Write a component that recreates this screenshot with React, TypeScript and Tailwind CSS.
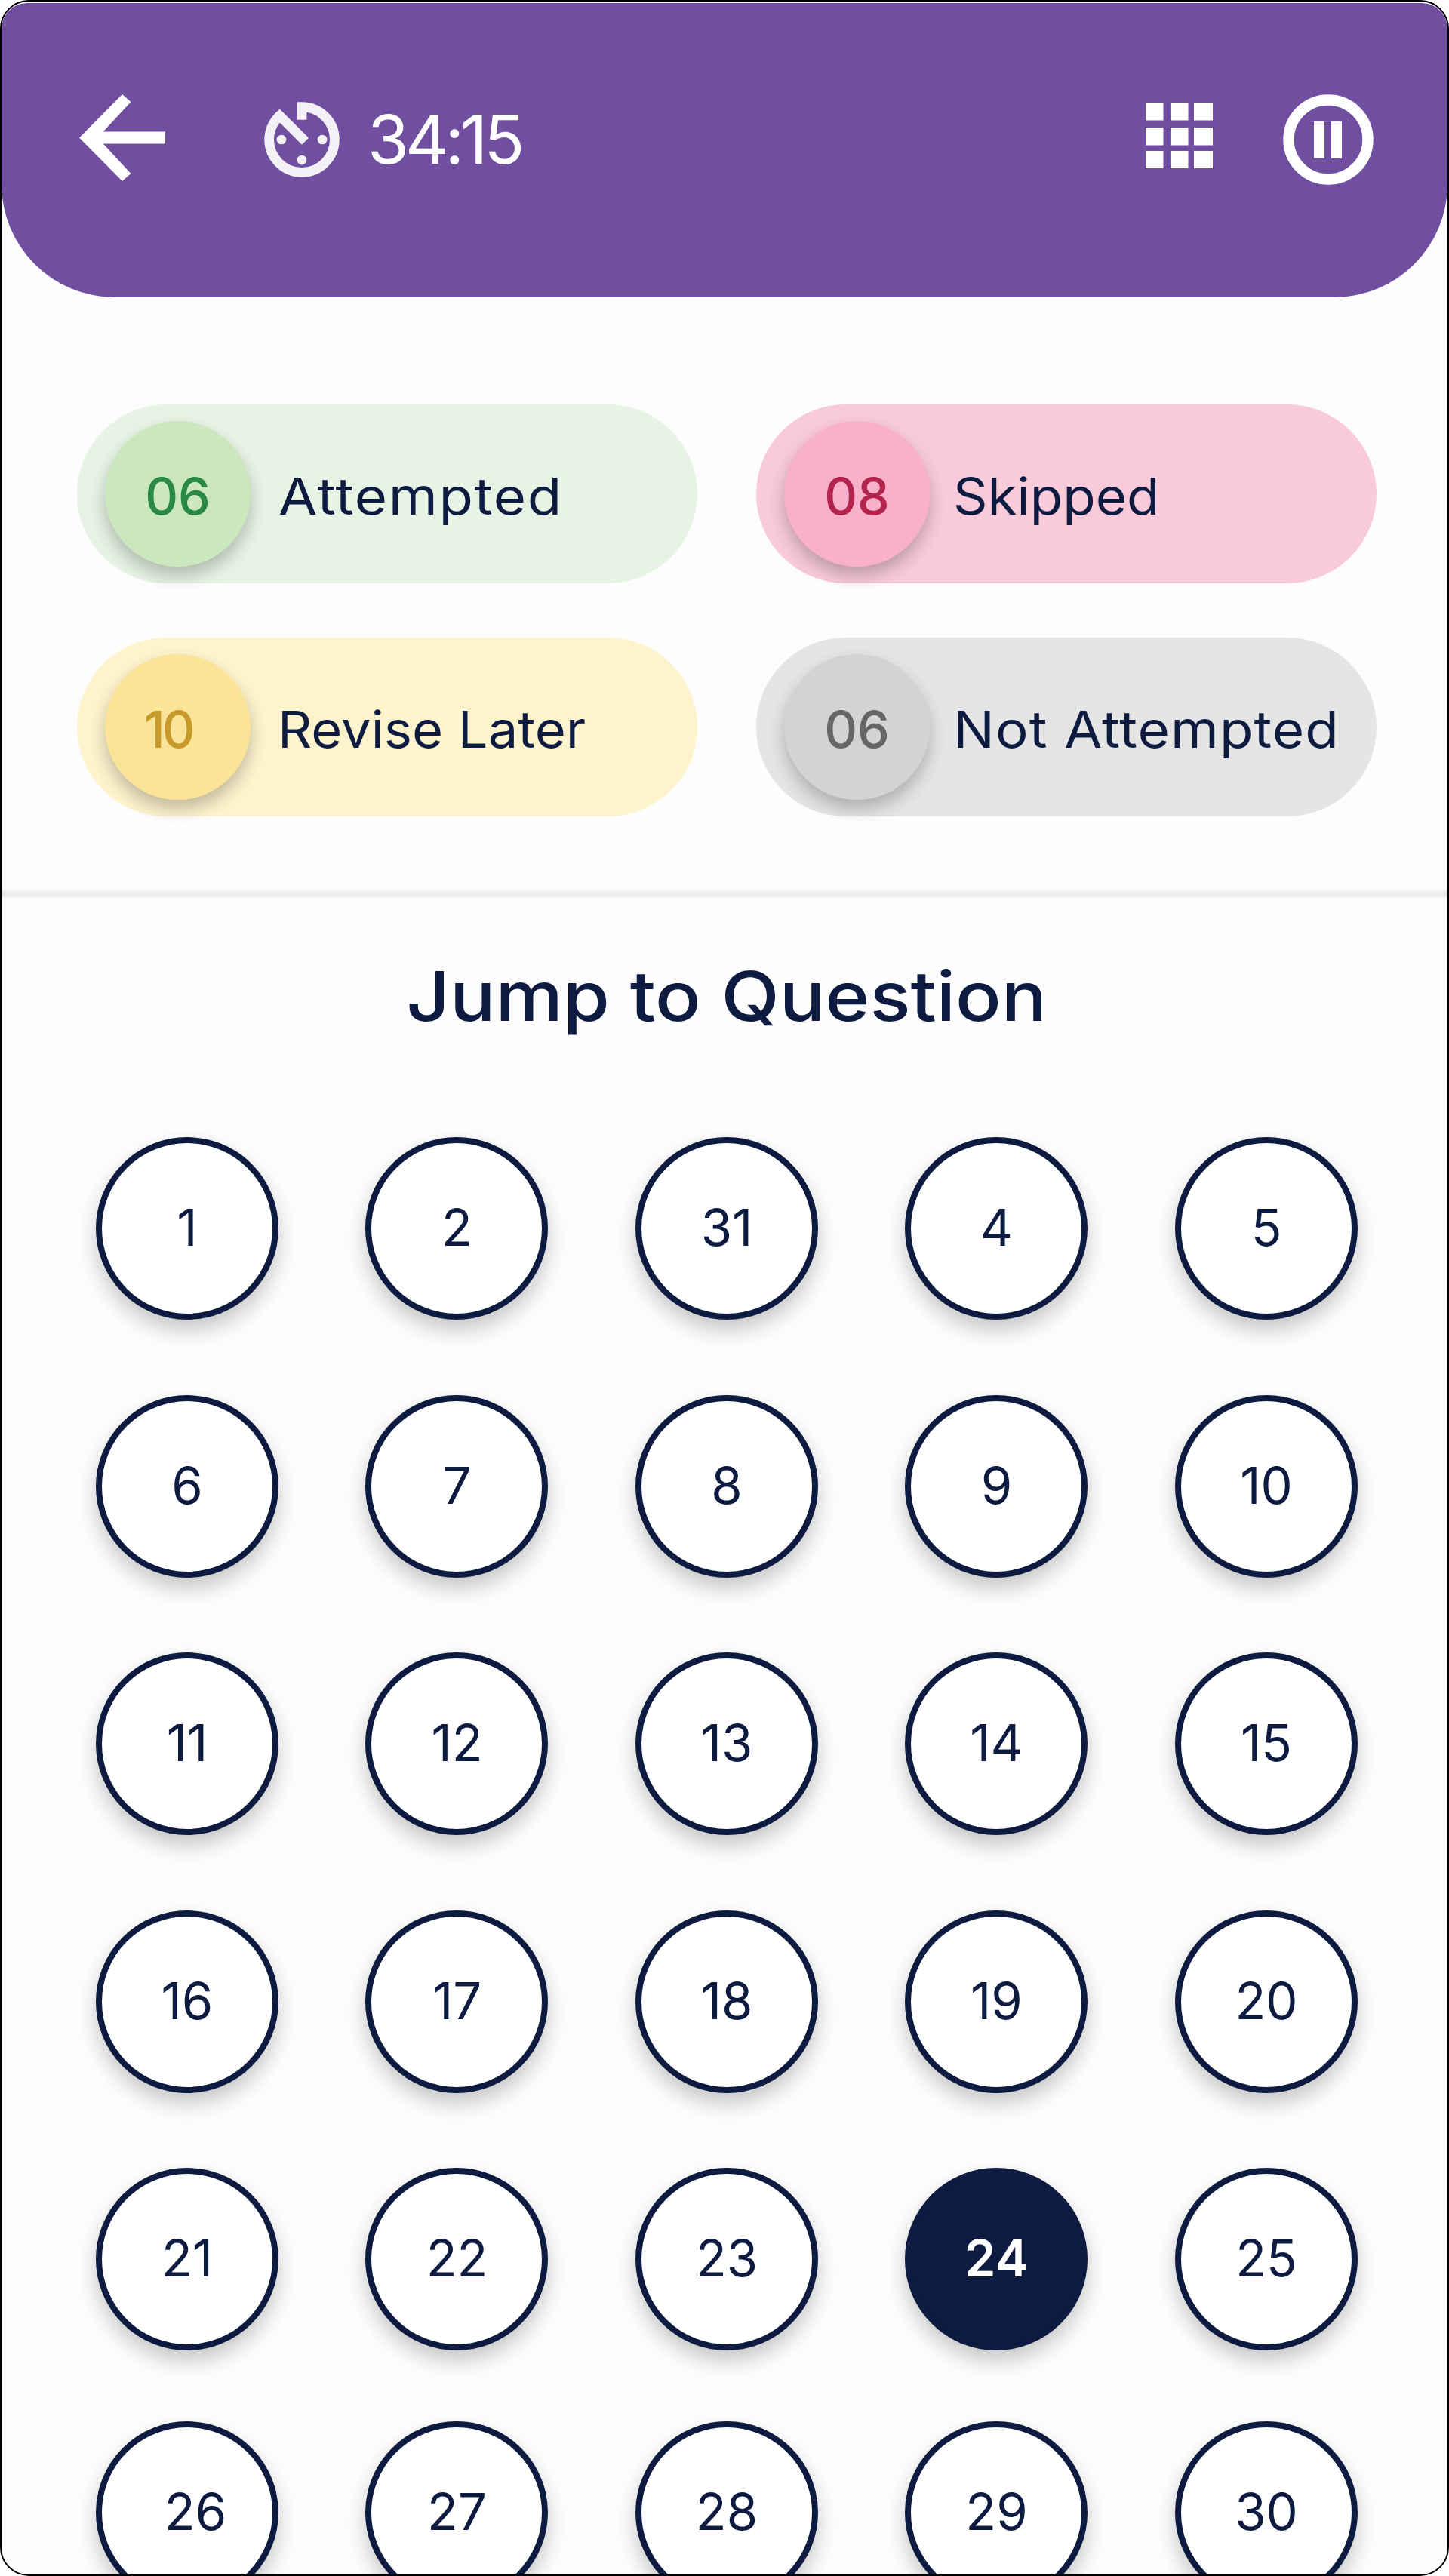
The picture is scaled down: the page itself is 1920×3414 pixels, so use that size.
import React, { useState } from 'react';

type Status = {
  count: string;
  label: string;
  pill: string;
  badge: string;
  countClass: string;
  labelClass: string;
};

const statuses: Status[] = [
  {
    count: '06',
    label: 'Attempted',
    pill: 'bg-[#e7f3e5]',
    badge: 'bg-[#cae7bd] text-[#2a8a45]',
    countClass: '',
    labelClass: 'ml-[37px] scale-x-[1.108] tracking-[1.5px]',
  },
  {
    count: '08',
    label: 'Skipped',
    pill: 'bg-[#f9cada]',
    badge: 'bg-[#f9b0ca] text-[#b3244f]',
    countClass: '',
    labelClass: 'ml-[31px] scale-x-[1.06]',
  },
  {
    count: '10',
    label: 'Revise Later',
    pill: 'bg-[#fdf3cd]',
    badge: 'bg-[#fbe398] text-[#c79a2b]',
    countClass: 'mr-[26px] tracking-[-4px]',
    labelClass: 'ml-[36px] scale-x-[1.052]',
  },
  {
    count: '06',
    label: 'Not Attempted',
    pill: 'bg-[#e5e5e5]',
    badge: 'bg-[#d3d3d3] text-[#666666]',
    countClass: '',
    labelClass: 'ml-[31px] scale-x-[1.087] tracking-[1px]',
  },
];

const questions = [
  1, 2, 31, 4, 5,
  6, 7, 8, 9, 10,
  11, 12, 13, 14, 15,
  16, 17, 18, 19, 20,
  21, 22, 23, 24, 25,
  26, 27, 28, 29, 30,
];

const BackIcon = () => (
  <svg width="114" height="115" viewBox="4 4 16 16" preserveAspectRatio="none" fill="currentColor">
    <path d="M20 10.9H8.45l5.15-5.5L12 4l-8 8 8 8 1.6-1.4-5.15-5.5H20z" />
  </svg>
);

const TimerIcon = () => (
  <svg width="130" height="130" viewBox="0 0 24 24" fill="currentColor" stroke="currentColor" strokeWidth="0.35">
    <path d="M11 3v4h2V5.08c3.39.49 6 3.39 6 6.92 0 3.87-3.13 7-7 7s-7-3.13-7-7c0-1.68.59-3.22 1.58-4.42L12 13l1.41-1.41-6.8-6.8v.02C4.42 6.45 3 9.05 3 12c0 4.97 4.02 9 9 9 4.97 0 9-4.03 9-9s-4.03-9-9-9z" />
    <circle cx="12" cy="17" r="1" />
    <circle cx="17" cy="12" r="1" />
    <circle cx="7" cy="12" r="1" />
  </svg>
);

const GridIcon = () => (
  <svg width="89" height="87" viewBox="0 0 89 87" fill="currentColor">
    {[0, 33, 64].map((y) =>
      [0, 33, 64].map((x) => <rect key={`${x}-${y}`} x={x} y={y} width={x === 64 ? 25 : 23.5} height="23.5" />)
    )}
  </svg>
);

const PauseIcon = () => (
  <svg width="120" height="120" viewBox="0 0 120 120" fill="currentColor">
    <circle cx="60" cy="60" r="52.5" fill="none" stroke="currentColor" strokeWidth="14.5" />
    <rect x="41" y="36" width="14" height="49" />
    <rect x="64" y="36" width="14" height="49" />
  </svg>
);

const StatusPill = ({ status }: { status: Status }) => (
  <div className={`flex h-[237px] items-center rounded-full pl-[37px] ${status.pill}`}>
    <div
      className={`flex size-[193px] shrink-0 items-center justify-center rounded-full pt-[5px] text-[68px] font-medium leading-none shadow-[0_12px_22px_rgba(0,0,0,0.24)] ${status.badge}`}
    >
      <span className={status.countClass}>{status.count}</span>
    </div>
    <span className={`mt-[5px] origin-left whitespace-nowrap text-[67px] leading-none ${status.labelClass}`}>
      {status.label}
    </span>
  </div>
);

const App = () => {
  const [current, setCurrent] = useState(24);

  return (
    <div className="h-[3414px] w-full overflow-hidden rounded-[38px] border-2 border-black bg-[#fdfdfd] pt-[2px] font-['Inter',sans-serif] text-[#0d1b40]">
      <header className="flex h-[390px] items-start justify-between rounded-b-[150px] rounded-t-[34px] bg-[#704fa1] pl-[103px] pr-[98px] text-white">
        <div className="flex h-[357px] items-center">
          <button type="button" aria-label="Back">
            <BackIcon />
          </button>
          <div className="ml-[116px] mt-[5px] text-[#f3f0f6]">
            <TimerIcon />
          </div>
          <span className="ml-[22px] mt-[4px] text-[89px] leading-none tracking-[-5px]">34:15</span>
        </div>
        <div className="flex h-[357px] items-center gap-[93px]">
          <button type="button" aria-label="All questions" className="-mt-[6px]">
            <GridIcon />
          </button>
          <button type="button" aria-label="Pause" className="mt-[5px]">
            <PauseIcon />
          </button>
        </div>
      </header>

      <section className="grid grid-cols-2 gap-x-[78px] gap-y-[72px] pb-[97px] pl-[100px] pr-[94px] pt-[142px]">
        {statuses.map((status) => (
          <StatusPill key={status.label} status={status} />
        ))}
      </section>

      <div className="h-[11px] bg-linear-to-b from-[#f6f6f6] via-[#eaeaea] to-[#f4f4f4]" />

      <h1 className="mt-[84px] scale-x-[1.105] pl-[5px] text-center text-[91px] font-medium leading-[92px]">
        Jump to Question
      </h1>

      <div className="mt-[141px] grid grid-cols-[repeat(5,242px)] gap-x-[115.5px] gap-y-[99.5px] pl-[124.5px]">
        {questions.map((question, index) => (
          <button
            key={question}
            type="button"
            onClick={() => setCurrent(question)}
            className={`flex size-[242px] items-center justify-center rounded-full border-8 border-[#0d1b40] pb-[3px] pl-[1px] text-[67px] leading-none shadow-[0_14px_28px_rgba(0,0,0,0.22)] ${
              question === current ? 'bg-[#0d1b40] font-semibold text-white' : 'bg-white'
            } ${index >= 25 ? '-mt-[6px]' : ''}`}
          >
            <span className={question === 26 ? 'pl-[22px]' : ''}>{question}</span>
          </button>
        ))}
      </div>
    </div>
  );
};

export default App;
